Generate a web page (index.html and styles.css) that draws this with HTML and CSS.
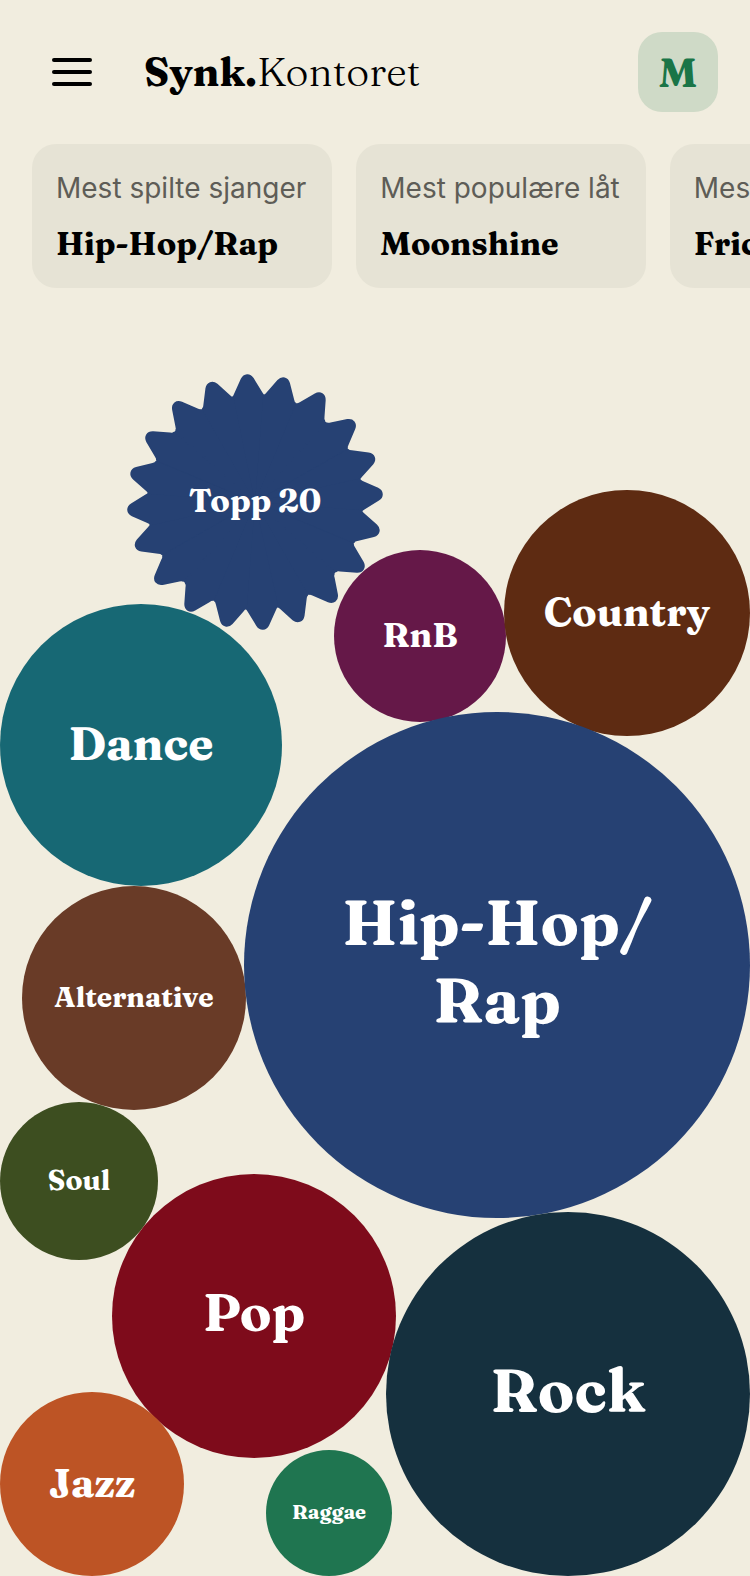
FILE: index.html
```html
<!DOCTYPE html>
<html lang="no">
<head>
<meta charset="utf-8">
<meta name="viewport" content="width=device-width, initial-scale=1">
<title>Synk.Kontoret</title>
<link rel="stylesheet" href="styles.css">
</head>
<body>
<header class="header">
  <button class="menu" type="button" aria-label="Meny">
    <svg class="menu-icon" viewBox="0 0 40 28" aria-hidden="true">
      <rect width="40" height="4" rx="2"/>
      <rect y="12" width="40" height="4" rx="2"/>
      <rect y="24" width="40" height="4" rx="2"/>
    </svg>
  </button>
  <h1 class="brand"><b>Synk.</b>Kontoret</h1>
  <button class="avatar" type="button">M</button>
</header>

<main>
  <dl class="stats">
    <div class="stat"><dt>Mest spilte sjanger</dt><dd>Hip-Hop/Rap</dd></div>
    <div class="stat"><dt>Mest populære låt</dt><dd>Moonshine</dd></div>
    <div class="stat"><dt>Mest</dt><dd>Fric</dd></div>
  </dl>

  <nav class="genres" aria-label="Sjangere">
    <a class="bubble top20" href="#topp20">
      <svg class="star" viewBox="-128 -128 256 256" aria-hidden="true">
        <defs>
          <path id="tooth" d="M0 0L-16.8 -106.1Q-15.2 -106.4 -14.3 -108.8L-6.4 -123.8Q-4 -128 0 -128Q4 -128 6.4 -123.8L14.3 -108.8Q15.2 -106.4 16.8 -106.1Z"/>
          <g id="quarter">
            <use href="#tooth"/>
            <use href="#tooth" transform="rotate(17)"/>
            <use href="#tooth" transform="rotate(35.4)"/>
            <use href="#tooth" transform="rotate(54.6)"/>
            <use href="#tooth" transform="rotate(73)"/>
          </g>
        </defs>
        <circle r="107"/>
        <g transform="rotate(-3.6)">
          <use href="#quarter"/>
          <use href="#quarter" transform="rotate(90)"/>
          <use href="#quarter" transform="rotate(180)"/>
          <use href="#quarter" transform="rotate(270)"/>
        </g>
      </svg>
      <span class="label">Topp 20</span>
    </a>
    <a class="bubble rnb" href="#rnb">RnB</a>
    <a class="bubble country" href="#country">Country</a>
    <a class="bubble dance" href="#dance">Dance</a>
    <a class="bubble alternative" href="#alternative">Alternative</a>
    <a class="bubble large hiphop" href="#hiphop">Hip-Hop/<br>Rap</a>
    <a class="bubble soul" href="#soul">Soul</a>
    <a class="bubble large pop" href="#pop">Pop</a>
    <a class="bubble large rock" href="#rock">Rock</a>
    <a class="bubble jazz" href="#jazz">Jazz</a>
    <a class="bubble raggae" href="#raggae">Raggae</a>
  </nav>
</main>
</body>
</html>
```

FILE: styles.css
```css
:root {
  --serif: Fraunces, "Liberation Serif", serif;
  --sans: Inter, "Liberation Sans", sans-serif;
}

* {
  box-sizing: border-box;
}

body {
  margin: 0;
  background: #f1eddf;
  color: #000;
  font-family: var(--serif);
  overflow-x: hidden;
}

button {
  border: 0;
  padding: 0;
  font: inherit;
  cursor: pointer;
}

.header {
  display: flex;
  align-items: center;
  gap: 32px;
  padding: 32px;
}

.menu,
.avatar {
  display: flex;
  align-items: center;
  justify-content: center;
  flex: none;
  width: 80px;
  height: 80px;
  border-radius: 24px;
}

.menu {
  background: none;
}

.menu-icon {
  width: 40px;
  height: 28px;
}

.brand {
  flex: 1;
  margin: 0;
  font-size: 40px;
  line-height: 56px;
  font-weight: 200;
}

.brand b {
  font-weight: 700;
}

.avatar {
  background: #cfdac7;
  color: #1a7547;
  font-size: 40px;
  font-weight: 700;
}

.stats {
  display: flex;
  gap: 24px;
  margin: 0;
  padding: 0 32px;
  overflow: hidden;
}

.stat {
  display: flex;
  flex-direction: column;
  gap: 16px;
  flex: none;
  min-width: 240px;
  padding: 24px 26px 24px 24px;
  border-radius: 24px;
  background: #e6e3d5;
}

.stat dt {
  font-family: var(--sans);
  font-size: 28px;
  line-height: 40px;
  color: #5e5d57;
}

.stat dd {
  margin: 0;
  font-size: 32px;
  line-height: 40px;
  font-weight: 700;
}

/* Bubble chart: --x, --y and --d are units of a 750 by 1288 canvas */
.genres {
  position: relative;
  aspect-ratio: 750 / 1288;
}

.bubble {
  position: absolute;
  left: calc(var(--x) / 750 * 100%);
  top: calc(var(--y) / 1288 * 100%);
  width: calc(var(--d) / 750 * 100%);
  aspect-ratio: 1;
  display: flex;
  align-items: center;
  justify-content: center;
  padding-bottom: 2px;
  border-radius: 50%;
  color: #fff;
  font-weight: 700;
  line-height: 78px;
  text-align: center;
  text-decoration: none;
}

.large {
  padding-bottom: 8px;
}

.star {
  position: absolute;
  inset: 0;
  width: 100%;
  height: 100%;
  fill: #264173;
}

.label {
  position: relative;
}

.top20 { --x: 127; --y: 86; --d: 256; font-size: 32px; }
.rnb { --x: 334; --y: 262; --d: 172; background: #651848; font-size: 34px; }
.country { --x: 504; --y: 202; --d: 246; background: #5e2b12; font-size: 40px; }
.dance { --x: 0; --y: 316; --d: 282; background: #176874; font-size: 46px; }
.alternative { --x: 22; --y: 598; --d: 224; background: #693b27; font-size: 28px; }
.hiphop { --x: 244; --y: 424; --d: 506; background: #264173; font-size: 63px; }
.soul { --x: 0; --y: 814; --d: 158; background: #3d4e20; font-size: 28px; }
.pop { --x: 112; --y: 886; --d: 284; background: #7e0b1b; font-size: 52px; }
.rock { --x: 386; --y: 924; --d: 364; background: #15303e; font-size: 60px; }
.jazz { --x: 0; --y: 1104; --d: 184; background: #bd5425; font-size: 40px; }
.raggae { --x: 266; --y: 1162; --d: 126; background: #1f7550; font-size: 20px; }
```
